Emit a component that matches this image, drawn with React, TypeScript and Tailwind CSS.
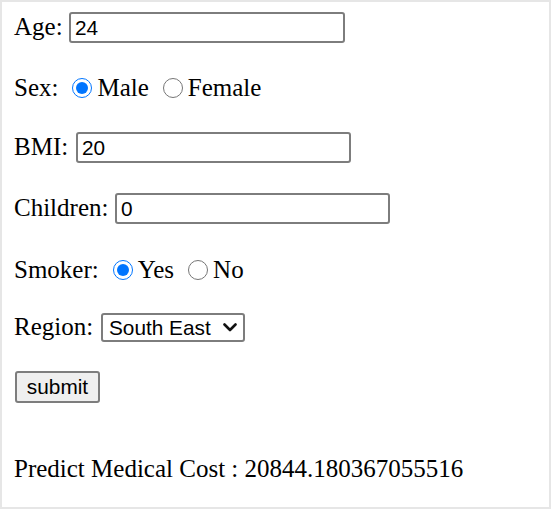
import React from "react";

function Radio({ checked }: { checked: boolean }) {
  return (
    <input
      type="radio"
      defaultChecked={checked}
      className="w-[20px] h-[20px] m-0 shrink-0 accent-[#0075ff]"
    />
  );
}

export default function App() {
  return (
    <div className="w-[551px] h-[509px] border-2 border-[#e6e6e6] bg-white text-black font-['Liberation_Serif',serif] text-[25px] flex flex-col pl-[12px] pt-[10px] overflow-hidden">
      {/* Age */}
      <div className="flex items-center h-[31px] shrink-0">
        <span className="mb-[3px] leading-[29px]">Age:</span>
        <input
          type="text"
          defaultValue="24"
          className="ml-[6.4px] w-[276px] h-[31px] border-2 border-[#7d7d7d] rounded-[3px] pl-[4px] font-['Liberation_Sans',Arial,sans-serif] text-[20.8px] text-black bg-white outline-none"
        />
      </div>

      {/* Sex */}
      <div className="flex items-center h-[29px] mt-[30px] shrink-0">
        <span className="leading-[29px]">Sex:</span>
        <span className="ml-[14px] flex items-center">
          <Radio checked={true} />
        </span>
        <span className="ml-[5px] leading-[29px]">Male</span>
        <span className="ml-[14px] flex items-center">
          <Radio checked={false} />
        </span>
        <span className="ml-[5px] leading-[29px]">Female</span>
      </div>

      {/* BMI */}
      <div className="flex items-center h-[31px] mt-[30px] shrink-0">
        <span className="mb-[3px] leading-[29px]">BMI:</span>
        <input
          type="text"
          defaultValue="20"
          className="ml-[7.8px] w-[275px] h-[31px] border-2 border-[#7d7d7d] rounded-[3px] pl-[4px] font-['Liberation_Sans',Arial,sans-serif] text-[20.8px] text-black bg-white outline-none"
        />
      </div>

      {/* Children */}
      <div className="flex items-center h-[31px] mt-[30px] shrink-0">
        <span className="mb-[3px] leading-[29px]">Children:</span>
        <input
          type="text"
          defaultValue="0"
          className="ml-[6.6px] w-[275px] h-[31px] border-2 border-[#7d7d7d] rounded-[3px] pl-[4px] font-['Liberation_Sans',Arial,sans-serif] text-[20.8px] text-black bg-white outline-none"
        />
      </div>

      {/* Smoker */}
      <div className="flex items-center h-[29px] mt-[31px] shrink-0">
        <span className="leading-[29px]">Smoker:</span>
        <span className="ml-[14px] flex items-center">
          <Radio checked={true} />
        </span>
        <span className="ml-[5px] leading-[29px]">Yes</span>
        <span className="ml-[14px] flex items-center">
          <Radio checked={false} />
        </span>
        <span className="ml-[5px] leading-[29px]">No</span>
      </div>

      {/* Region */}
      <div className="flex items-center h-[29px] mt-[29px] shrink-0">
        <span className="mb-[3px] leading-[29px]">Region:</span>
        <div className="ml-[7.8px] w-[144px] h-[29px] border-2 border-[#7d7d7d] rounded-[3px] bg-white flex items-center justify-between pl-[6px] pr-[6px] font-['Liberation_Sans',Arial,sans-serif] text-[20.8px] text-black">
          <span className="leading-[24px]">South East</span>
          <svg width="14" height="9" viewBox="0 0 14 9" className="shrink-0">
            <polyline
              points="1.5,1.5 7,7 12.5,1.5"
              fill="none"
              stroke="#111"
              strokeWidth="2.6"
              strokeLinecap="round"
              strokeLinejoin="round"
            />
          </svg>
        </div>
      </div>

      {/* Submit */}
      <div className="flex items-center h-[32px] mt-[29px] shrink-0">
        <button
          type="button"
          className="ml-[1px] w-[85px] h-[32px] border-2 border-[#7d7d7d] rounded-[3px] bg-[#efefef] font-['Liberation_Sans',Arial,sans-serif] text-[20.8px] text-black leading-[24px] flex items-center justify-center"
        >
          submit
        </button>
      </div>

      {/* Result */}
      <div className="flex items-center h-[29px] mt-[51px] shrink-0">
        <span className="leading-[29px]">Predict Medical Cost : 20844.180367055516</span>
      </div>
    </div>
  );
}
